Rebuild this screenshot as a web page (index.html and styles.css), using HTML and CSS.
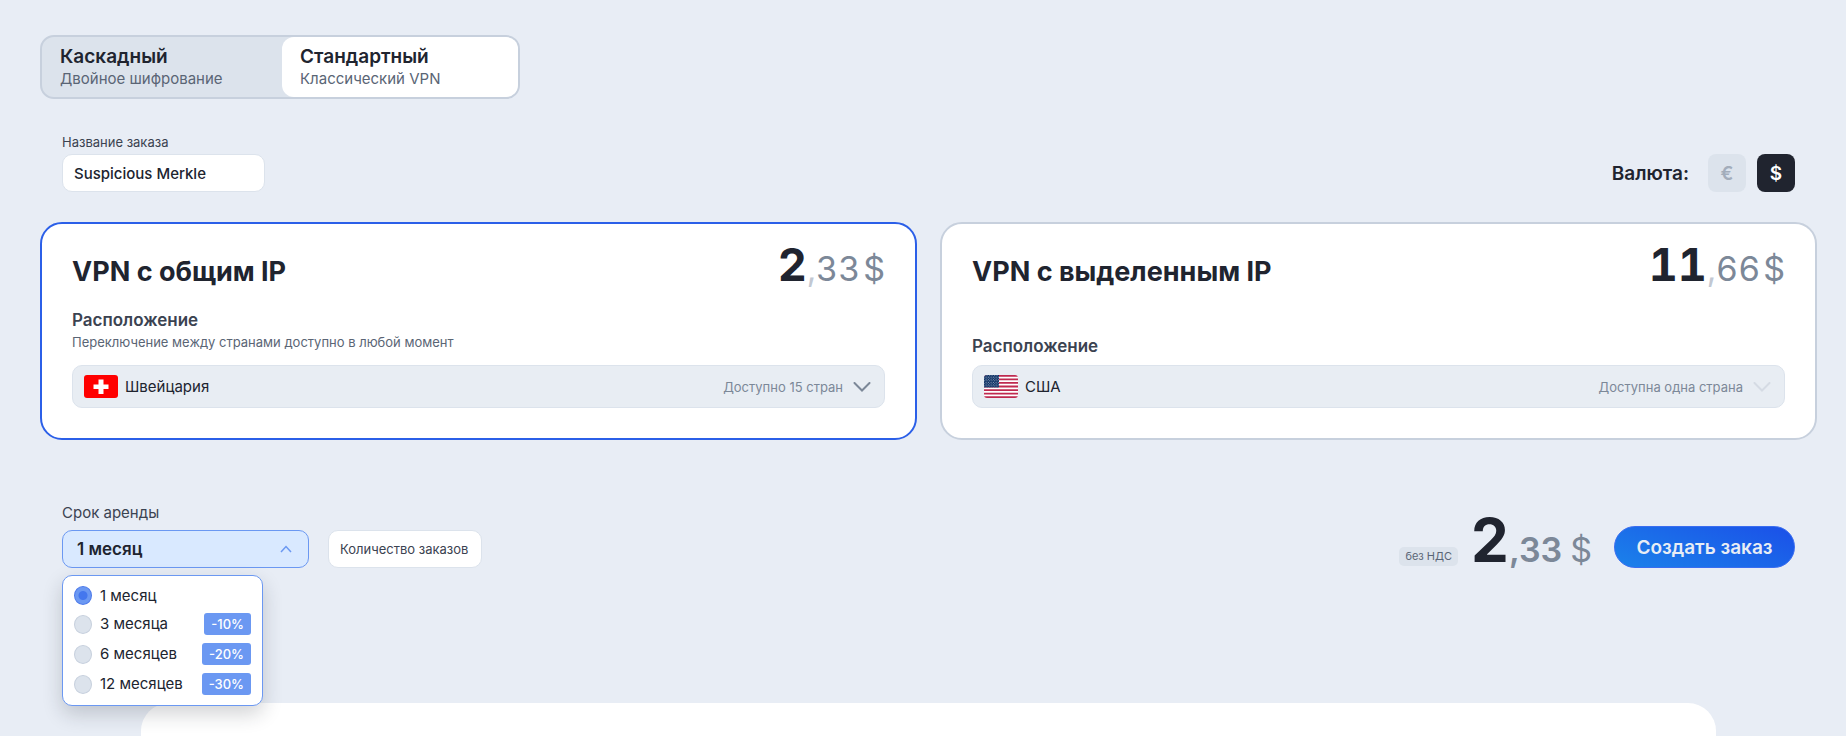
FILE: index.html
```html
<!DOCTYPE html>
<html lang="ru">
<head>
    <meta charset="UTF-8">
    <meta name="viewport" content="width=device-width, initial-scale=1.0">
    <title>Заказ VPN</title>
    <link rel="stylesheet" href="styles.css">
</head>
<body>
    <main>
        <!-- VPN type -->
        <div class="tabs">
            <button type="button" class="tab"><strong>Каскадный</strong><span>Двойное шифрование</span></button>
            <button type="button" class="tab active"><strong>Стандартный</strong><span>Классический VPN</span></button>
        </div>

        <!-- Order name and currency -->
        <div class="order-row">
            <div class="field">
                <label for="orderName">Название заказа</label>
                <input type="text" id="orderName" class="text-input" value="Suspicious Merkle">
            </div>
            <div class="currency">
                <span class="currency-label">Валюта:</span>
                <button type="button" class="currency-btn">€</button>
                <button type="button" class="currency-btn active">$</button>
            </div>
        </div>

        <!-- Plans -->
        <div class="plans">
            <section class="plan selected">
                <div class="plan-head">
                    <h2>VPN с общим IP</h2>
                    <div class="price"><b>2</b><i>,</i><span>33</span><em>$</em></div>
                </div>
                <div class="location">
                    <label for="country1">Расположение</label>
                    <p class="hint">Переключение между странами доступно в любой момент</p>
                    <div class="country">
                        <svg class="flag" viewBox="0 0 34 23">
                            <rect width="34" height="23" fill="#f00"/>
                            <path d="M14.5 4.500h5v5h5v4.500h-5v5h-5v-5h-5v-4.500h5z" fill="#fff"/>
                        </svg>
                        <select id="country1"><option>Швейцария</option></select>
                        <span class="available">Доступно 15 стран</span>
                        <svg class="chevron" viewBox="0 0 18 10"><path d="M1.500 1L9 8.500L16.500 1"/></svg>
                    </div>
                </div>
            </section>

            <section class="plan">
                <div class="plan-head">
                    <h2>VPN с выделенным IP</h2>
                    <div class="price"><b>11</b><i>,</i><span>66</span><em>$</em></div>
                </div>
                <div class="location">
                    <label for="country2">Расположение</label>
                    <div class="country">
                        <svg class="flag" viewBox="0 0 34 23">
                            <defs>
                                <pattern id="stars" width="2.500" height="2.600" patternUnits="userSpaceOnUse">
                                    <circle cx="0.700" cy="0.700" r="0.450" fill="#fff"/>
                                    <circle cx="1.950" cy="2" r="0.450" fill="#fff"/>
                                </pattern>
                            </defs>
                            <rect width="34" height="23" fill="#fff"/>
                            <path d="M0 .88h34M0 4.420h34M0 7.960h34M0 11.500h34M0 15.040h34M0 18.580h34M0 22.120h34" stroke="#bf2a50" stroke-width="1.770"/>
                            <rect width="15" height="12.400" fill="#052a60"/>
                            <rect width="15" height="12.400" fill="url(#stars)"/>
                        </svg>
                        <select id="country2"><option>США</option></select>
                        <span class="available">Доступна одна страна</span>
                        <svg class="chevron off" viewBox="0 0 18 10"><path d="M1.500 1L9 8.500L16.500 1"/></svg>
                    </div>
                </div>
            </section>
        </div>

        <!-- Rent period and total -->
        <div class="checkout">
            <div class="field">
                <label for="period" class="period-label">Срок аренды</label>
                <div class="period">
                    <select id="period"><option>1 месяц</option></select>
                    <svg class="arrow-up" viewBox="0 0 12 8"><path d="M1 7L6 1.500L11 7"/></svg>
                    <div class="period-menu">
                        <label><input type="radio" name="months" checked>1 месяц</label>
                        <label><input type="radio" name="months">3 месяца<span class="discount">-10%</span></label>
                        <label><input type="radio" name="months">6 месяцев<span class="discount">-20%</span></label>
                        <label><input type="radio" name="months">12 месяцев<span class="discount">-30%</span></label>
                    </div>
                </div>
            </div>
            <input type="text" class="count-input" placeholder="Количество заказов" aria-label="Количество заказов">
            <div class="summary">
                <span class="vat">без НДС</span>
                <div class="total"><b>2</b><span>,33</span><em>$</em></div>
                <button type="button" class="create-btn">Создать заказ</button>
            </div>
        </div>
    </main>
    <div class="panel"></div>
</body>
</html>
```
FILE: styles.css
```css
* {
    box-sizing: border-box;
}
html {
    height: 100%;
}
body {
    display: flex;
    flex-direction: column;
    min-height: 100%;
    margin: 0;
    padding: 35px 29px 0 40px;
    background-color: #e8edf5;
    color: #20242f;
    font-family: Inter, "Liberation Sans", sans-serif;
    font-size: 15px;
}
button, input, select {
    margin: 0;
    font-family: inherit;
    color: inherit;
}
button {
    cursor: pointer;
}

/* tabs */
.tabs {
    display: grid;
    grid-template-columns: 240px 1fr;
    width: 480px;
    height: 64px;
    border: 2px solid #c7d0dd;
    border-radius: 14px;
    background-color: #dce3ec;
}
.tab {
    display: flex;
    flex-direction: column;
    justify-content: center;
    padding: 2px 18px 0;
    border: none;
    border-radius: 12px;
    background: none;
    text-align: left;
}
.tab.active {
    background-color: #fff;
}
.tab strong {
    font-size: 19px;
    font-weight: 600;
    line-height: 22px;
}
.tab span {
    font-size: 15px;
    line-height: 22px;
    color: #5a6575;
}

/* order name + currency */
.order-row {
    display: flex;
    justify-content: space-between;
    align-items: flex-end;
    margin: 35px 0 30px;
    padding: 0 22px;
}
.field {
    display: flex;
    flex-direction: column;
    gap: 4px;
}
.field label {
    font-size: 13px;
    line-height: 16px;
    color: #3b4351;
}
.text-input, .count-input {
    height: 38px;
    padding: 0 11px;
    border: 1px solid #dce3ec;
    border-radius: 10px;
    background-color: #fff;
}
.text-input {
    width: 203px;
    font-size: 15px;
    font-weight: 500;
}
.currency {
    display: flex;
    align-items: center;
    gap: 11px;
}
.currency-label {
    margin-right: 8px;
    font-size: 19px;
    font-weight: 600;
}
.currency-btn {
    width: 38px;
    height: 38px;
    padding: 0;
    border: none;
    border-radius: 8px;
    background-color: #dce3ec;
    color: #a3adbb;
    font-size: 19px;
    font-weight: 600;
}
.currency-btn.active {
    background-color: #20242f;
    color: #fff;
}

/* plans */
.plans {
    display: grid;
    grid-template-columns: 1fr 1fr;
    gap: 23px;
}
.plan {
    display: flex;
    flex-direction: column;
    justify-content: space-between;
    min-height: 218px;
    padding: 11px 30px 30px;
    border: 2px solid #c7d0dd;
    border-radius: 22px;
    background-color: #fff;
}
.plan.selected {
    border-color: #2b5fe8;
}
.plan-head {
    display: flex;
    justify-content: space-between;
    align-items: baseline;
}
.plan h2 {
    margin: 0;
    font-size: 27px;
    font-weight: 700;
}
.price {
    display: flex;
    align-items: baseline;
    font-size: 34px;
    line-height: 60px;
    color: #7c8898;
    font-variant-numeric: tabular-nums;
}
.price b {
    font-size: 45px;
    font-weight: 700;
    color: #20242f;
}
.price i {
    font-style: normal;
    color: #c2c8d2;
}
.price em {
    margin-left: 3px;
    font-style: normal;
}
.location {
    display: flex;
    flex-direction: column;
}
.location label {
    font-size: 17px;
    font-weight: 600;
    line-height: 18px;
    color: #3b4351;
}
.hint {
    margin: 5px 0;
    font-size: 13px;
    line-height: 16px;
    color: #5a6575;
}
.country {
    display: flex;
    align-items: center;
    height: 43px;
    margin-top: 10px;
    padding: 0 13px 0 11px;
    border: 1px solid #dce3ec;
    border-radius: 10px;
    background-color: #e8edf3;
}
.flag {
    width: 34px;
    height: 23px;
    margin-right: 7px;
    border-radius: 3px;
}
.country select, .period select {
    flex: 1;
    padding: 0;
    border: none;
    background: none;
    appearance: none;
    outline: none;
}
.country select {
    font-size: 15px;
}
.available {
    font-size: 13px;
    color: #7c8898;
}
.chevron {
    width: 18px;
    height: 10px;
    margin-left: 10px;
    fill: none;
    stroke: #7c8898;
    stroke-width: 2;
    stroke-linecap: round;
}
.chevron.off {
    stroke: #d5dbe4;
}

/* checkout */
.checkout {
    display: flex;
    align-items: flex-end;
    margin-top: 63px;
    padding: 0 22px;
}
.checkout .field {
    gap: 7px;
}
.field .period-label {
    font-size: 15px;
    line-height: 20px;
}
.period {
    position: relative;
    display: flex;
    align-items: center;
    width: 247px;
    height: 38px;
    padding: 0 16px 0 14px;
    border: 1px solid #6b98f2;
    border-radius: 10px;
    background-color: #d9e9ff;
}
.period select {
    font-size: 17px;
    font-weight: 600;
}
.arrow-up {
    width: 12px;
    height: 8px;
    fill: none;
    stroke: #6b98f2;
    stroke-width: 1.5;
}
.period-menu {
    position: absolute;
    top: 44px;
    left: -1px;
    width: 201px;
    padding: 6px 11px;
    border: 1px solid #6b98f2;
    border-radius: 10px;
    background-color: #fff;
    box-shadow: 0 8px 20px rgba(32, 36, 47, 0.2);
}
.period-menu label {
    display: flex;
    align-items: center;
    height: 30px;
    font-size: 15px;
    color: #20242f;
}
.period-menu label:first-child {
    height: 27px;
}
.period-menu input {
    width: 18px;
    height: 19px;
    margin-right: 8px;
    border: 1px solid #c7d0dd;
    border-radius: 50%;
    background-color: #dce3ec;
    appearance: none;
}
.period-menu input:checked {
    border-color: #4a78ea;
    background: radial-gradient(circle, #4477ee 4px, #6b98f2 5px);
}
.discount {
    margin-left: auto;
    padding: 0 7px;
    border-radius: 3px;
    background-color: #6b98f2;
    color: #fff;
    font-size: 13px;
    font-weight: 500;
    line-height: 22px;
}
.count-input {
    width: 154px;
    margin-left: 19px;
    font-size: 13px;
}
.count-input::placeholder {
    color: #3b4351;
    opacity: 1;
}
.summary {
    display: flex;
    align-items: flex-end;
    margin-left: auto;
}
.vat {
    margin: 0 13px 2px 0;
    padding: 0 6px;
    border-radius: 5px;
    background-color: #dce3ec;
    color: #5a6575;
    font-size: 11px;
    line-height: 19px;
}
.total {
    display: flex;
    align-items: baseline;
    margin-right: 22px;
    font-size: 34px;
    font-weight: 600;
    line-height: 36px;
    color: #7c8898;
}
.total b {
    font-size: 60px;
    font-weight: 700;
    color: #20242f;
}
.total em {
    margin-left: 8px;
    font-style: normal;
    font-weight: 400;
}
.create-btn {
    width: 181px;
    height: 42px;
    padding: 0;
    border: 1px solid #3a6df0;
    border-radius: 21px;
    background: linear-gradient(20deg, #1b82ea, #1b50e8);
    color: #e8edf5;
    font-size: 19px;
    font-weight: 600;
}

/* next block */
.panel {
    flex: 1;
    margin: 135px 101px 0;
    border-radius: 28px 28px 0 0;
    background-color: #fff;
}
```
